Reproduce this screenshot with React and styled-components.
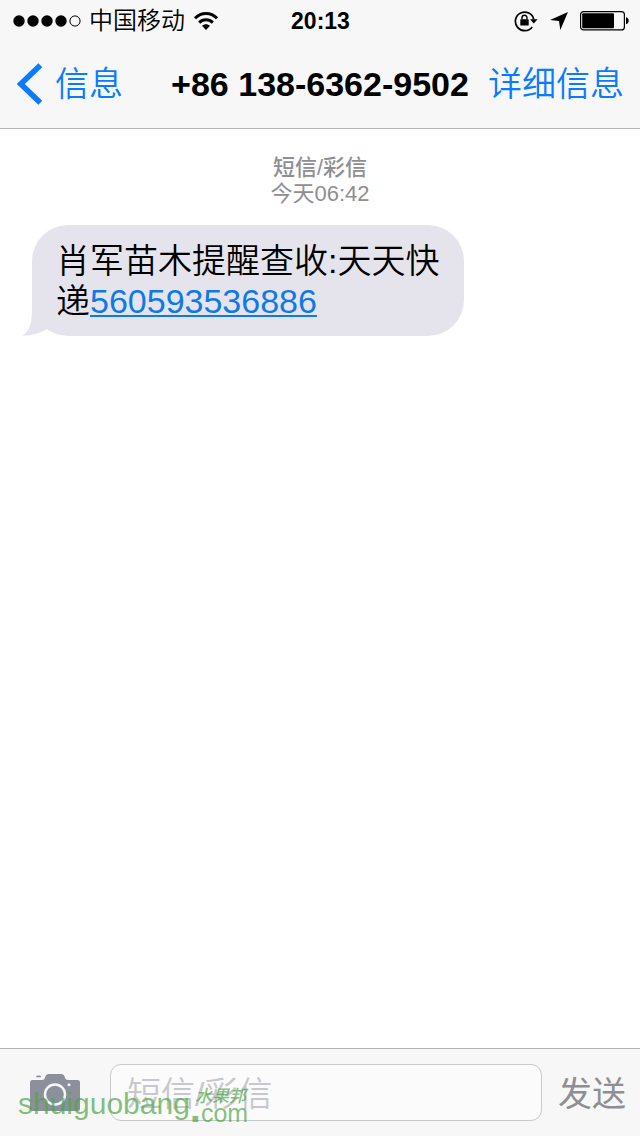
import React, { useState } from "react";
import styled, { createGlobalStyle } from "styled-components";

const GlobalStyle = createGlobalStyle`
  * {
    box-sizing: border-box;
  }
  body {
    margin: 0;
    background-color: #fff;
    color: #000;
    font-family: "Liberation Sans", "Noto Sans CJK SC", sans-serif;
    font-weight: 350;
  }
  button, input {
    font-family: inherit;
    font-weight: inherit;
  }
`;

const Screen = styled.div`
  position: relative;
  display: flex;
  flex-direction: column;
  min-height: 100vh;
`;

const Header = styled.header`
  background-color: #f7f7f7;
  border-bottom: 1px solid #b2b2b2;
`;

const StatusBar = styled.div`
  display: grid;
  grid-template-columns: 1fr auto 1fr;
  align-items: center;
  height: 40px;
  padding: 2px 11px 0 12px;
  font-size: 24px;
  line-height: 38px;
`;

const StatusGroup = styled.div`
  display: flex;
  align-items: center;
  justify-content: ${props => (props.$end ? "flex-end" : "flex-start")};
  gap: ${props => (props.$end ? "12px" : "8px")};
`;

const Time = styled.time`
  font-size: 23px;
  font-weight: 600;
`;

const NavBar = styled.nav`
  display: grid;
  grid-template-columns: 1fr auto 1fr;
  align-items: center;
  height: 88px;
  padding: 0 16px;
`;

const NavLink = styled.a`
  display: flex;
  align-items: center;
  justify-self: ${props => (props.$end ? "end" : "start")};
  gap: 12px;
  color: #0a7aff;
  font-size: 34px;
  line-height: 40px;
  text-decoration: none;
`;

const Title = styled.h1`
  margin: 0;
  font-size: 34px;
  font-weight: 600;
  line-height: 40px;
`;

const Thread = styled.main`
  flex: 1;
  padding: 26px 32px;
`;

const Stamp = styled.div`
  margin-bottom: 18px;
  color: #8e8e93;
  font-size: 22px;
  line-height: 26px;
  text-align: center;
  strong {
    display: block;
    font-weight: 500;
  }
  time {
    display: block;
    font-weight: 400;
  }
`;

const Bubble = styled.div`
  position: relative;
  width: fit-content;
  max-width: 75%;
  padding: 16px 24px 15px;
  border-radius: 36px;
  background-color: #e5e4ec;
  font-size: 34px;
  line-height: 40px;
  p {
    margin: 0;
  }
  a {
    color: #0f7ae5;
    text-decoration-thickness: 2px;
    text-underline-offset: 2px;
  }
`;

const Tail = styled.svg`
  position: absolute;
  left: -10px;
  bottom: 0;
`;

const Composer = styled.form`
  display: flex;
  align-items: center;
  height: 88px;
  padding: 0 14px 0 30px;
  border-top: 1px solid #b2b2b2;
  background-color: #f7f7f7;
`;

const IconButton = styled.button`
  display: flex;
  padding: 0;
  border: 0;
  background: none;
`;

const MessageInput = styled.input`
  flex: 1;
  min-width: 0;
  height: 57px;
  margin: 0 16px 0 30px;
  padding: 3px 16px 0;
  border: 1px solid #c8c8cd;
  border-radius: 11px;
  background-color: #fbfbfb;
  font-size: 34px;
  &::placeholder {
    color: #c7c7cc;
    opacity: 1;
  }
`;

const SendButton = styled.button`
  padding: 2px 0 0;
  border: 0;
  background: none;
  color: #8e8e93;
  font-size: 34px;
  font-weight: 400;
  line-height: 40px;
`;

const Watermark = styled.div`
  position: absolute;
  left: 18px;
  bottom: 12px;
  display: flex;
  align-items: flex-end;
  color: rgba(76, 166, 70, 0.7);
  font-size: 30px;
  font-weight: 400;
  line-height: 40px;
  pointer-events: none;
`;

const WatermarkDot = styled.span`
  font-size: 40px;
  font-weight: 700;
  line-height: 32px;
`;

const WatermarkSite = styled.span`
  display: flex;
  flex-direction: column;
  font-size: 25px;
  line-height: 22px;
  b {
    margin-left: -6px;
    font-size: 17px;
    font-style: italic;
    font-weight: 500;
    line-height: 10px;
  }
`;

const SignalIcon = () => (
  <svg width="69" height="14" viewBox="0 0 69 14">
    {[7, 21, 35, 49].map(x => (
      <circle key={x} cx={x} cy="7" r="5.7" />
    ))}
    <circle cx="63" cy="7" r="5.1" fill="none" stroke="#000" />
  </svg>
);

const WifiIcon = () => (
  <svg width="26" height="20" viewBox="0 0 26 20">
    <g fill="none" stroke="#000" strokeWidth="3">
      <path d="M2 7.2C8.2 .9 17.8 .9 24 7.2" />
      <path d="M6.2 11.6C10.1 7.8 15.9 7.8 19.8 11.6" />
    </g>
    <path d="M13 19l-4-4.3c2.3-2.1 5.7-2.1 8 0z" />
  </svg>
);

const LockIcon = () => (
  <svg width="24" height="22" viewBox="0 0 24 22">
    <path
      d="M18.2 16.9A9.3 9.3 0 1 1 19.8 9.5"
      fill="none"
      stroke="#000"
      strokeWidth="1.7"
    />
    <path d="M16 9.3h7.6l-3.8 4.2z" />
    <rect x="6.3" y="9.3" width="8.4" height="6.3" rx=".6" />
    <path
      d="M8 9.500V7.700a2.500 2.500 0 0 1 5 0v1.800"
      fill="none"
      stroke="#000"
      strokeWidth="1.4"
    />
  </svg>
);

const LocationIcon = () => (
  <svg width="18" height="18" viewBox="0 0 18 18">
    <path d="M18 0L10.3 18L9 9L0 7.900z" />
  </svg>
);

const BatteryIcon = () => (
  <svg width="49" height="20" viewBox="0 0 49 20">
    <rect x=".6" y=".6" width="43.8" height="18.3" rx="3" fill="none" stroke="#000" strokeWidth="1.2" />
    <rect x="2.200" y="2.200" width="31.8" height="15.1" rx="1" />
    <path d="M46 6.200c3.600.7 3.600 6.400 0 7.100z" />
  </svg>
);

const BackIcon = () => (
  <svg width="27" height="42" viewBox="0 0 27 42">
    <path d="M24.3 2.200L4.800 21L24.300 39.800" fill="none" stroke="#0a7aff" strokeWidth="5.600" />
  </svg>
);

const CameraIcon = () => (
  <svg width="50" height="38" viewBox="0 0 50 38" fill="#8b909c">
    <path d="M6 3.200q0-1.700 1.600-1.700h2q1.600 0 1.600 1.700z" />
    <path d="M2.500 6H12c2 0 2.500-1.200 3.200-3C16 .8 17 0 18.500 0h13c1.500 0 2.500.8 3.300 3 .7 1.800 1.200 3 3.200 3h9.500Q50 6 50 8.500v26q0 2.500-2.500 2.500h-45Q0 37 0 34.500v-26Q0 6 2.500 6z" />
    <circle cx="25" cy="20.5" r="10" fill="none" stroke="#f7f7f7" strokeWidth="2.4" />
    <circle cx="39" cy="10.8" r="1.5" fill="#f7f7f7" />
  </svg>
);

export default function App() {
  const [text, setText] = useState("");

  return (
    <Screen>
      <GlobalStyle />
      <Header>
        <StatusBar>
          <StatusGroup>
            <SignalIcon />
            <span>中国移动</span>
            <WifiIcon />
          </StatusGroup>
          <Time>20:13</Time>
          <StatusGroup $end>
            <LockIcon />
            <LocationIcon />
            <BatteryIcon />
          </StatusGroup>
        </StatusBar>
        <NavBar>
          <NavLink href="#messages">
            <BackIcon />
            信息
          </NavLink>
          <Title>+86 138-6362-9502</Title>
          <NavLink href="#details" $end>
            详细信息
          </NavLink>
        </NavBar>
      </Header>
      <Thread>
        <Stamp>
          <strong>短信/彩信</strong>
          <time>今天06:42</time>
        </Stamp>
        <Bubble>
          <Tail width="36" height="36" viewBox="0 0 36 36" fill="#e5e4ec">
            <path d="M10 0C10 19 10 31 0 35.500C8 36 17 33.500 24 29.500L36 0z" />
          </Tail>
          <p>
            肖军苗木提醒查收:天天快递<a href="#560593536886">560593536886</a>
          </p>
        </Bubble>
      </Thread>
      <Composer onSubmit={e => e.preventDefault()}>
        <IconButton type="button" aria-label="相机">
          <CameraIcon />
        </IconButton>
        <MessageInput
          aria-label="短信/彩信"
          placeholder="短信/彩信"
          value={text}
          onChange={e => setText(e.target.value)}
        />
        <SendButton type="submit">发送</SendButton>
      </Composer>
      <Watermark>
        shuiguobang
        <WatermarkDot>.</WatermarkDot>
        <WatermarkSite>
          <b>水果邦</b>
          com
        </WatermarkSite>
      </Watermark>
    </Screen>
  );
}
